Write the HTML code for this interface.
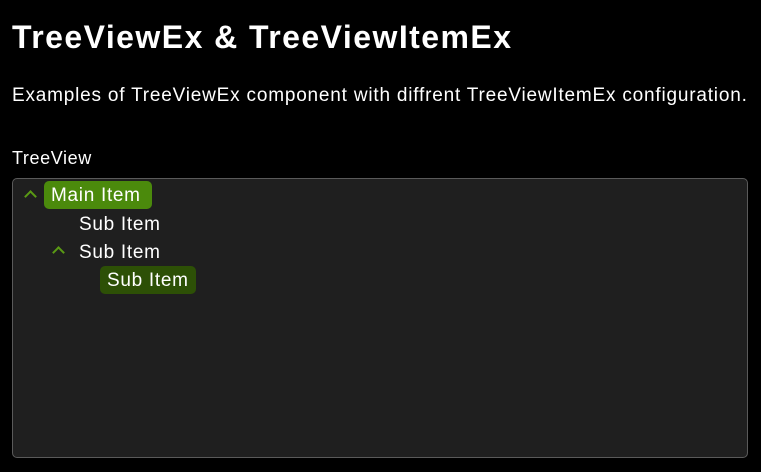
<!DOCTYPE html><html><head><style>
body{margin:0;background:#000;width:761px;height:472px;overflow:hidden;font-family:"Liberation Sans",sans-serif;color:#fff;position:relative}
.a{position:absolute;white-space:nowrap}
h1{position:absolute;left:12px;top:19px;margin:0;font-size:32px;font-weight:bold;letter-spacing:1.45px;white-space:nowrap}
.box{position:absolute;left:12px;top:178px;width:734px;height:278px;border:1px solid #5a5a5a;border-radius:5px;background:#1f1f1f}
.it{position:absolute;font-size:19px;height:28px;line-height:30px;padding:0 7px;border-radius:5px;letter-spacing:0.7px;white-space:nowrap}
.chev{position:absolute;width:7px;height:7px;border-left:2px solid #5a9a14;border-top:2px solid #5a9a14;transform:rotate(45deg)}
</style></head><body>
<h1>TreeViewEx &amp; TreeViewItemEx</h1>
<div class="a" style="left:12px;top:85px;font-size:19px;letter-spacing:0.8px">Examples of TreeViewEx component with diffrent TreeViewItemEx configuration.</div>
<div class="a" style="left:12px;top:148px;font-size:18px;letter-spacing:0.6px">TreeView</div>
<div class="box"></div>
<div class="chev" style="left:26px;top:192px"></div>
<div class="it" style="left:44px;top:181px;background:#4b8a0c;width:94px">Main Item</div>
<div class="it" style="left:72px;top:210px">Sub Item</div>
<div class="chev" style="left:54px;top:248px"></div>
<div class="it" style="left:72px;top:238px">Sub Item</div>
<div class="it" style="left:100px;top:266px;background:#2d5006;width:82px">Sub Item</div>
</body></html>
